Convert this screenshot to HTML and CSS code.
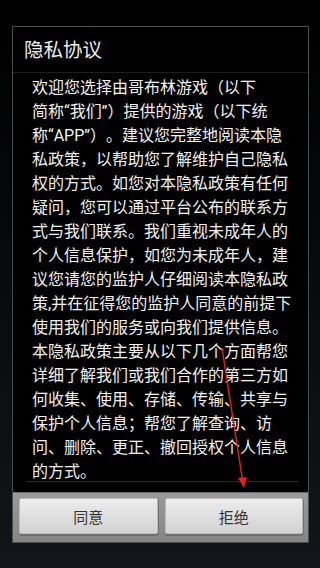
FILE: index.html
```html
<!DOCTYPE html>
<html lang="zh">
<head>
<meta charset="utf-8">
<link rel="stylesheet" href="styles.css">
</head>
<body>
<div class="screen">
  <div class="dialog">
    <div class="title">隐私协议</div>
    <div class="scroll">
      <p class="text">欢迎您选择由哥布林游戏（以下<br>简称“我们”）提供的游戏（以下统<br>称“APP”）。建议您完整地阅读本隐<br>私政策，以帮助您了解维护自己隐私<br>权的方式。如您对本隐私政策有任何<br>疑问，您可以通过平台公布的联系方<br>式与我们联系。我们重视未成年人的<br>个人信息保护，如您为未成年人，建<br>议您请您的监护人仔细阅读本隐私政<br>策,并在征得您的监护人同意的前提下<br>使用我们的服务或向我们提供信息。<br>本隐私政策主要从以下几个方面帮您<br>详细了解我们或我们合作的第三方如<br>何收集、使用、存储、传输、共享与<br>保护个人信息；帮您了解查询、访<br>问、删除、更正、撤回授权个人信息<br>的方式。</p>
    </div>
    <div class="divider"></div>
    <div class="buttons">
      <button class="btn">同意</button>
      <button class="btn">拒绝</button>
    </div>
  </div>
  <svg class="arrow" width="320" height="568" viewBox="0 0 320 568">
    <line x1="222" y1="348" x2="242.5" y2="480" stroke="#e0201e" stroke-width="1.5"/>
    <polygon points="238,478 247,477 244,488" fill="#e0201e"/>
  </svg>
</div>
</body>
</html>
```

FILE: styles.css
```css
html, body {
  margin: 0;
  padding: 0;
}
body {
  width: 320px;
  height: 568px;
  overflow: hidden;
  background: linear-gradient(#000 0%, #07080a 40%, #121519 100%);
  font-family: Roboto, "Noto Sans CJK SC", sans-serif;
}
.screen {
  position: relative;
  width: 320px;
  height: 568px;
  padding-top: 26px;
  box-sizing: border-box;
}
.dialog {
  margin-left: 12px;
  width: 297px;
  box-sizing: border-box;
  border: 1px solid #4c4c4c;
  background: #000;
  display: flex;
  flex-direction: column;
}
.title {
  height: 42px;
  line-height: 42px;
  padding: 3px 0 0 11px;
  font-size: 19.5px;
  color: #ececec;
  border-bottom: 1px solid #1e1e1e;
}
.scroll {
  height: 408px;
  padding: 0 0 0 19px;
}
.text {
  margin: 3px 0 0 0;
  font-size: 16px;
  line-height: 24px;
  color: #f2f2f2;
  white-space: nowrap;
  text-spacing-trim: space-all;
}
.divider {
  height: 1px;
  margin: 0 9px 0 13px;
  background: #2a2a2a;
}
.buttons {
  margin-top: 10px;
  height: 50px;
  box-sizing: border-box;
  padding: 5px 5px 0 6px;
  background: linear-gradient(#9a9a9a, #868686);
  border-top: 1px solid #6a6a6a;
  display: flex;
  gap: 7px;
}
.btn {
  flex: 1;
  height: 36px;
  margin: 0;
  padding: 0;
  border: 1px solid #bdbdbd;
  border-radius: 2px;
  background: linear-gradient(#ececec, #d2d2d2);
  box-shadow: 1px 1px 0 #6e6e6e, 0 2px 0 #707070;
  font-family: Roboto, "Noto Sans CJK SC", sans-serif;
  font-size: 15px;
  color: #333;
}
.arrow {
  position: absolute;
  left: 0;
  top: 0;
  pointer-events: none;
}
```
